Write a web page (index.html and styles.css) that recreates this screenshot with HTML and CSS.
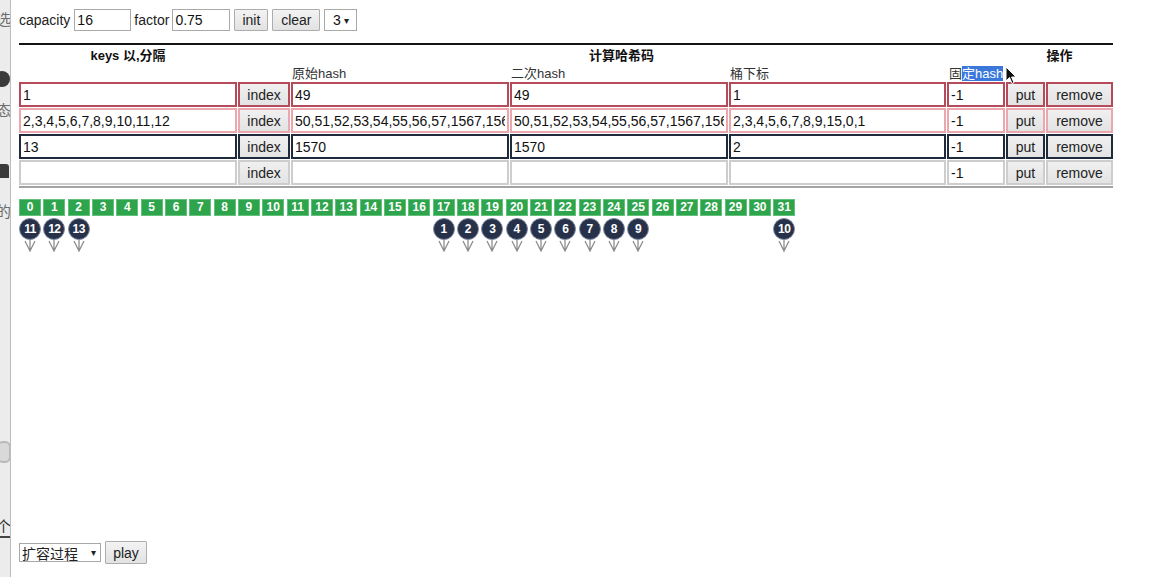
FILE: index.html
```html
<!DOCTYPE html>
<html lang="zh">
<head>
<meta charset="utf-8">
<title>hash</title>
<link rel="stylesheet" href="styles.css">
</head>
<body>
<div class="page">
  <aside class="strip">
    <span class="g g1">选</span>
    <span class="dot"></span>
    <span class="g g2">态</span>
    <span class="blk"></span>
    <span class="g g3">的</span>
    <span class="ico"></span>
    <span class="g g5">个</span>
    <span class="bar"></span>
  </aside>
  <main class="main">
    <div class="toolbar">
      <span class="lbl">capacity</span>
      <input class="txt w57" value="16">
      <span>factor</span>
      <input class="txt w58" value="0.75">
      <button class="btn w34">init</button>
      <button class="btn w48">clear</button>
      <span class="sel">3 <i class="caret">▾</i></span>
    </div>

    <section class="table">
      <div class="cols hdr1">
        <div class="h1 span1">keys 以,分隔</div>
        <div class="h1 span26">计算哈希码</div>
        <div class="h1 span78">操作</div>
      </div>
      <div class="cols hdr2">
        <div class="h2 col3">原始hash</div>
        <div class="h2 col4">二次hash</div>
        <div class="h2 col5">桶下标</div>
        <div class="h2 col6">固<span class="hl">定hash</span><span class="cursor"><svg width="12" height="19" viewBox="0 0 12 19"><path d="M1 1 L1 15 L4.5 11.5 L7 17.5 L9 16.6 L6.6 11 L11 11 Z" fill="#111" stroke="#fff" stroke-width="1"/></svg></span></div>
      </div>

      <div class="rows">
        <div class="cols row r1">
          <input class="cell" value="1">
          <button class="cell b">index</button>
          <input class="cell" value="49">
          <input class="cell" value="49">
          <input class="cell" value="1">
          <input class="cell" value="-1">
          <button class="cell b">put</button>
          <button class="cell b">remove</button>
        </div>
        <div class="cols row r2">
          <input class="cell" value="2,3,4,5,6,7,8,9,10,11,12">
          <button class="cell b">index</button>
          <input class="cell" value="50,51,52,53,54,55,56,57,1567,1568,1569">
          <input class="cell" value="50,51,52,53,54,55,56,57,1567,1568,1569">
          <input class="cell" value="2,3,4,5,6,7,8,9,15,0,1">
          <input class="cell" value="-1">
          <button class="cell b">put</button>
          <button class="cell b">remove</button>
        </div>
        <div class="cols row r3">
          <input class="cell" value="13">
          <button class="cell b">index</button>
          <input class="cell" value="1570">
          <input class="cell" value="1570">
          <input class="cell" value="2">
          <input class="cell" value="-1">
          <button class="cell b">put</button>
          <button class="cell b">remove</button>
        </div>
        <div class="cols row r4">
          <input class="cell" value="">
          <button class="cell b">index</button>
          <input class="cell" value="">
          <input class="cell" value="">
          <input class="cell" value="">
          <input class="cell" value="-1">
          <button class="cell b">put</button>
          <button class="cell b">remove</button>
        </div>
      </div>
    </section>

    <div class="buckets">
      <span class="bk">0</span><span class="bk">1</span><span class="bk">2</span><span class="bk">3</span><span class="bk">4</span><span class="bk">5</span><span class="bk">6</span><span class="bk">7</span><span class="bk">8</span><span class="bk">9</span><span class="bk">10</span><span class="bk">11</span><span class="bk">12</span><span class="bk">13</span><span class="bk">14</span><span class="bk">15</span><span class="bk">16</span><span class="bk">17</span><span class="bk">18</span><span class="bk">19</span><span class="bk">20</span><span class="bk">21</span><span class="bk">22</span><span class="bk">23</span><span class="bk">24</span><span class="bk">25</span><span class="bk">26</span><span class="bk">27</span><span class="bk">28</span><span class="bk">29</span><span class="bk">30</span><span class="bk">31</span>
    </div>

    <div class="pins">
      <div class="pin p0"><span class="ball">11</span><svg class="arrow" width="22" height="12" viewBox="0 0 22 12"><path d="M6 1 L11 11 L16 1 M11 0 V11" fill="none" stroke="#8d8d8d" stroke-width="1.3"/></svg></div>
      <div class="pin p1"><span class="ball">12</span><svg class="arrow" width="22" height="12" viewBox="0 0 22 12"><path d="M6 1 L11 11 L16 1 M11 0 V11" fill="none" stroke="#8d8d8d" stroke-width="1.3"/></svg></div>
      <div class="pin p2"><span class="ball">13</span><svg class="arrow" width="22" height="12" viewBox="0 0 22 12"><path d="M6 1 L11 11 L16 1 M11 0 V11" fill="none" stroke="#8d8d8d" stroke-width="1.3"/></svg></div>
      <div class="pin p17"><span class="ball">1</span><svg class="arrow" width="22" height="12" viewBox="0 0 22 12"><path d="M6 1 L11 11 L16 1 M11 0 V11" fill="none" stroke="#8d8d8d" stroke-width="1.3"/></svg></div>
      <div class="pin p18"><span class="ball">2</span><svg class="arrow" width="22" height="12" viewBox="0 0 22 12"><path d="M6 1 L11 11 L16 1 M11 0 V11" fill="none" stroke="#8d8d8d" stroke-width="1.3"/></svg></div>
      <div class="pin p19"><span class="ball">3</span><svg class="arrow" width="22" height="12" viewBox="0 0 22 12"><path d="M6 1 L11 11 L16 1 M11 0 V11" fill="none" stroke="#8d8d8d" stroke-width="1.3"/></svg></div>
      <div class="pin p20"><span class="ball">4</span><svg class="arrow" width="22" height="12" viewBox="0 0 22 12"><path d="M6 1 L11 11 L16 1 M11 0 V11" fill="none" stroke="#8d8d8d" stroke-width="1.3"/></svg></div>
      <div class="pin p21"><span class="ball">5</span><svg class="arrow" width="22" height="12" viewBox="0 0 22 12"><path d="M6 1 L11 11 L16 1 M11 0 V11" fill="none" stroke="#8d8d8d" stroke-width="1.3"/></svg></div>
      <div class="pin p22"><span class="ball">6</span><svg class="arrow" width="22" height="12" viewBox="0 0 22 12"><path d="M6 1 L11 11 L16 1 M11 0 V11" fill="none" stroke="#8d8d8d" stroke-width="1.3"/></svg></div>
      <div class="pin p23"><span class="ball">7</span><svg class="arrow" width="22" height="12" viewBox="0 0 22 12"><path d="M6 1 L11 11 L16 1 M11 0 V11" fill="none" stroke="#8d8d8d" stroke-width="1.3"/></svg></div>
      <div class="pin p24"><span class="ball">8</span><svg class="arrow" width="22" height="12" viewBox="0 0 22 12"><path d="M6 1 L11 11 L16 1 M11 0 V11" fill="none" stroke="#8d8d8d" stroke-width="1.3"/></svg></div>
      <div class="pin p25"><span class="ball">9</span><svg class="arrow" width="22" height="12" viewBox="0 0 22 12"><path d="M6 1 L11 11 L16 1 M11 0 V11" fill="none" stroke="#8d8d8d" stroke-width="1.3"/></svg></div>
      <div class="pin p31"><span class="ball">10</span><svg class="arrow" width="22" height="12" viewBox="0 0 22 12"><path d="M6 1 L11 11 L16 1 M11 0 V11" fill="none" stroke="#8d8d8d" stroke-width="1.3"/></svg></div>
    </div>

    <div class="footer">
      <span class="sel2">扩容过程 <i class="caret">▾</i></span>
      <button class="btn play">play</button>
    </div>
  </main>
</div>
</body>
</html>
```

FILE: styles.css
```css
* { box-sizing: border-box; }
html, body { margin: 0; padding: 0; background: #fff; }
body {
  font-family: "Liberation Sans", "Noto Sans CJK SC", Arial, sans-serif;
  font-size: 14px;
  color: #222;
  width: 1157px;
  height: 577px;
  overflow: hidden;
}
.page { display: flex; height: 577px; }

/* left clipped strip */
.strip {
  width: 11px;
  flex: none;
  background: #ececec;
  border-right: 1px solid #bdbdbd;
  overflow: hidden;
  display: flex;
  flex-direction: column;
}
.strip .g {
  display: block;
  font-size: 15px;
  line-height: 18px;
  color: #6d6d6d;
  margin-left: -4px;
  white-space: nowrap;
}
.strip .g1 { margin-top: 11px; }
.strip .dot {
  display: block; width: 16px; height: 16px; border-radius: 50%;
  background: #3a3a3a; margin-left: -6px; margin-top: 42px;
}
.strip .g2 { margin-top: 15px; }
.strip .blk {
  display: block; width: 9px; height: 14px; background: #3b3b3b;
  margin-left: 0; margin-top: 44px; border-top-right-radius: 3px;
}
.strip .g3 { margin-top: 25px; }
.strip .ico {
  display: block; width: 14px; height: 22px; margin-top: 220px; margin-left: -3px;
  border: 2px solid #b9b9b9; border-radius: 6px; background: #d9d9d9;
}
.strip .g5 { margin-top: 55px; color: #333; }
.strip .bar { display: block; width: 10px; height: 2px; background: #444; margin-top: 0; }

.main { flex: 1; padding-left: 8px; }

/* toolbar */
.toolbar {
  display: flex;
  align-items: center;
  gap: 3px;
  height: 22px;
  margin-top: 9px;
}
.lbl { margin-right: 1px; }
.txt {
  height: 22px;
  border: 1px solid #a9a9a9;
  padding: 0 2px;
  font: 14px "Liberation Sans", Arial, sans-serif;
  color: #111;
}
.w57 { width: 57px; }
.w58 { width: 58px; }
.btn {
  height: 22px;
  border: 1px solid #adadad;
  background: linear-gradient(#f3f3f3, #e2e2e2);
  font: 14px "Liberation Sans", Arial, sans-serif;
  color: #222;
  padding: 0;
  border-radius: 1px;
}
.w34 { width: 34px; margin-left: 1px; }
.w48 { width: 48px; margin-left: 1px; }
.sel {
  display: inline-flex; align-items: center; justify-content: center;
  width: 33px; height: 22px; border: 1px solid #a9a9a9; background: #fff;
  gap: 3px; color: #111; margin-left: 1px;
}
.caret { font-style: normal; font-size: 10px; color: #222; }

/* table */
.table {
  width: 1094px;
  margin-top: 12px;
  border-top: 2px solid #151515;
}
.cols {
  display: grid;
  grid-template-columns: 218px 52px 218px 218px 217px 58px 39px 67px;
  column-gap: 1px;
}
.hdr1 { height: 18px; align-items: center; }
.hdr2 { height: 18px; align-items: center; }
.h1 { font-weight: bold; font-size: 13px; color: #111; text-align: center; }
.span1 { grid-column: 1; }
.span26 { grid-column: 2 / 7; }
.span78 { grid-column: 7 / 9; }
.h2 { font-size: 13px; color: #333; white-space: nowrap; padding-left: 1px; }
.col3 { grid-column: 3; }
.col4 { grid-column: 4; }
.col5 { grid-column: 5; }
.col6 { grid-column: 6; position: relative; padding-left: 2px; }
.hl { background: #3a78dc; color: #fff; }
.cursor { position: absolute; left: 58px; top: 3px; line-height: 0; }

.rows {
  margin-top: 1px;
  display: flex;
  flex-direction: column;
  gap: 1px;
  padding-bottom: 1px;
  border-bottom: 2px solid #a3a3a3;
}
.row { height: 25px; }
.cell {
  height: 25px;
  width: 100%;
  border: 2px solid #cfcfcf;
  background: #fff;
  font: 14px "Liberation Sans", Arial, sans-serif;
  color: #111;
  padding: 0 2px;
  margin: 0;
  outline: none;
}
.cell.b {
  background: linear-gradient(#f0f0f0, #e3e3e3);
  color: #222;
  padding: 0;
  text-align: center;
}
.r1 .cell { border-color: #b44a5a; }
.r2 .cell { border-color: #eaa7ae; }
.r3 .cell { border-color: #1f2a3c; }
.r4 .cell { border-color: #cdcdcd; }

/* buckets */
.buckets {
  display: grid;
  grid-template-columns: repeat(32, 22px);
  column-gap: 2.33px;
  margin-top: 11px;
}
.bk {
  height: 17px;
  background: #2ea44d;
  border: 1px solid #62c17a;
  color: #fff;
  font-weight: bold;
  font-size: 12px;
  line-height: 15px;
  text-align: center;
}
.pins {
  display: grid;
  grid-template-columns: repeat(32, 22px);
  column-gap: 2.33px;
  margin-top: 2px;
  height: 34px;
}
.pin { display: flex; flex-direction: column; align-items: center; grid-row: 1; }
.ball {
  width: 22px; height: 22px; border-radius: 50%;
  background: #27324a;
  border: 1px solid #7f8ba0;
  color: #fff; font-weight: bold; font-size: 12px;
  display: flex; align-items: center; justify-content: center;
  letter-spacing: -0.5px;
}
.arrow { display: block; }
.p0 { grid-column: 1; } .p1 { grid-column: 2; } .p2 { grid-column: 3; }
.p17 { grid-column: 18; } .p18 { grid-column: 19; } .p19 { grid-column: 20; }
.p20 { grid-column: 21; } .p21 { grid-column: 22; } .p22 { grid-column: 23; }
.p23 { grid-column: 24; } .p24 { grid-column: 25; } .p25 { grid-column: 26; }
.p31 { grid-column: 32; }

/* footer */
.footer {
  margin-top: 289px;
  display: flex;
  align-items: center;
  gap: 4px;
  height: 23px;
}
.sel2 {
  display: inline-flex; align-items: center; justify-content: space-between;
  width: 82px; height: 19px; border: 1px solid #a9a9a9; background: #fff;
  padding: 0 4px 0 2px; color: #222; font-size: 14px;
}
.play { width: 42px; height: 23px; }
```
